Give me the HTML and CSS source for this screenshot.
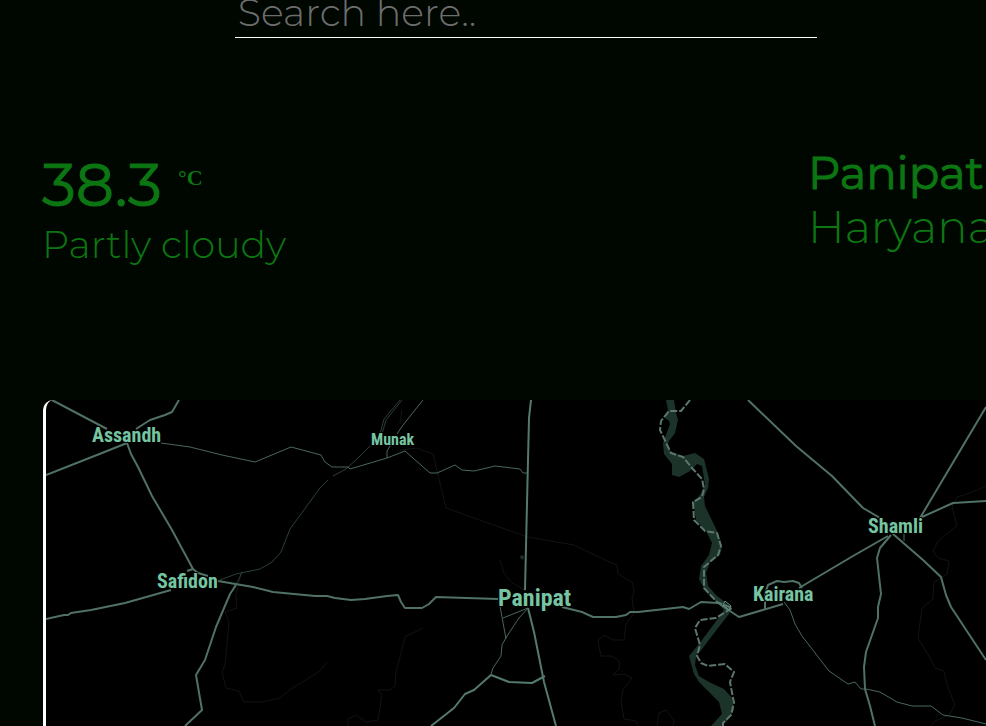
FILE: index.html
```html
<!DOCTYPE html>
<html lang="en">
<head>
<meta charset="utf-8">
<title>Weather</title>
<link rel="stylesheet" href="styles.css">
</head>
<body>
<main class="page">
  <form class="search">
    <input class="search-input" type="text" aria-label="Search" placeholder="Search here..">
  </form>
  <section class="summary">
    <div class="weather">
      <div class="temperature"><span class="degrees">38.3</span><span class="unit">°C</span></div>
      <div class="condition">Partly cloudy</div>
    </div>
    <div class="place">
      <div class="city">Panipat</div>
      <div class="region">Haryana</div>
    </div>
  </section>
  <section class="map">
    <svg class="map-canvas" viewBox="46 400 940 326" preserveAspectRatio="xMinYMin slice" role="img" aria-label="Map around Panipat">
      <g class="river">
        <path d="M666 400H674L676 413L678 420L675 433L669 441L667 445L671 452L683 456L695 453L704 459L709 479L708 488L704 497L705 506L718 533L722 546L720 555L710 562L706 573L708 586L716 595L726 603L731 607L729 614L718 628L702 649L696 656L695 665L699 676L709 682L724 689L732 698L734 710L727 721L721 726H711L722 714L719 702L709 692L699 682L694 674L689 656L699 644L714 624L724 610L718 603L706 592L699 579L701 566L709 555L712 543L706 531L696 520L693 502L700 495L705 485L702 466L697 464L690 471L679 477L672 475V464L664 454L663 443L670 424L669 421L665 418L668 410Z"/>
        <path d="M521 555L524 556L523 560L520 558Z"/>
      </g>
      <g class="boundary">
        <path d="M400 450L417 448L427 452L433 454L440 483L446 508L485 522L528 537L574 545L605 560L617 565L618 574L632 582L634 591L632 599L634 613L626 624L624 640L613 640L604 635L598 641L601 656L612 656L620 662L619 669L613 675L624 674L632 678L623 690L621 702L624 719L636 721L638 726"/>
        <path d="M657 726L659 713L666 710L674 720L673 726"/>
        <path d="M242 571L236 594L237 608L225 612L229 622L225 665L222 672L226 688L239 691L244 702L262 702L280 698L291 689L320 671L327 662"/>
        <path d="M423 628L405 637L401 653L396 672L395 686L390 690L378 690L382 695L378 720L366 722L356 715L348 719V726"/>
        <path d="M986 486L970 493L957 497L952 507L957 526L938 541L933 551L938 558L949 561L947 574L934 582L933 599L922 608L918 638L930 658L935 668L944 671L947 685L955 705L949 715L935 721L931 726"/>
        <path d="M500 560L504 573L511 582L526 591M402 409L400 424"/>
      </g>
      <g class="canal">
        <path d="M400 400L384 419L380 434M402 400L386 420L382 434M370 446L359 457L346 469L333 476"/>
        <path d="M328 480L320 488L290 529L281 552L272 562L260 569L236 574L220 580M242 572L238 581L233 588"/>
      </g>
      <g class="minor">
        <path d="M161 443L190 447L222 455L255 462L291 447L321 455L325 462L332 467L348 467L350 469L387 458L405 451L430 473L437 473L455 465L462 470L474 471L495 466L520 469L523 473H528M423 400L403 425L397 434M390 446L387 451V458"/>
        <path d="M500 606L506 639M503 618L528 608L519 618L507 636L502 645L501 656L493 668L491 674"/>
        <path d="M784 602L790 610L795 624L802 636L829 671L848 684L855 682L861 689L866 689L880 692L897 702L912 706H931L943 715L962 718L986 724M904 534V541"/>
      </g>
      <g class="road">
        <path d="M52 400L107 429M179 400L172 412L165 415L150 420L136 429M46 475L102 453L127 443M127 443L131 454L138 467L152 496L172 530L193 569L187 571M193 569L198 573L208 576"/>
        <path d="M46 619L64 615L68 615L71 613L91 610L125 603L171 590M218 581L253 587L273 592L315 596H327L335 598L351 600L365 599L387 596L398 595L401 602L405 608H422L429 604L436 597L498 599"/>
        <path d="M236 585L230 594L216 627L205 660L196 675L202 710L185 726"/>
        <path d="M562 607L582 612L593 617H616L626 615L630 612L638 612L665 609L683 607L689 609L701 602L718 603L730 611L739 617L783 604"/>
        <path d="M765 609V602L765 594L768 585L777 581L784 582L793 581L799 583L802 588M799 588L853 556L888 536"/>
        <path d="M748 400L796 446L832 476L863 508L880 518M920 518L986 407M922 517L953 503L986 501M891 535L880 548L877 558L881 594L878 607V618L866 652L864 667L865 689L870 706L875 726M893 534L923 560L941 577L946 595L951 607L986 660"/>
      </g>
      <g class="highway">
        <path d="M531 400L529 418L528 460L525 590"/>
        <path d="M528 608L534 632L544 682L556 726M431 726L454 708L465 694L474 690L491 675L509 682L532 683L545 676"/>
      </g>
      <path class="border-line" d="M690 400L681 411H669L661 421L660 430L671 453L683 457L692 468L702 479L704 489L702 497L693 502L694 520L705 531L717 533L721 546L718 555L704 567V588L717 602L732 608L716 618L700 620L695 628L700 645L697 656L701 663L708 666L725 664L734 672L730 682L734 703L731 715L723 723V726"/>
      <path class="junction" d="M725 601L731 606L729 610L723 605Z"/>
      <g class="labels">
        <text x="92" y="442" class="town">Assandh</text>
        <text x="371" y="445" class="village">Munak</text>
        <text x="157" y="588" class="town">Safidon</text>
        <text x="498" y="606" class="town-large">Panipat</text>
        <text x="753" y="601" class="town">Kairana</text>
        <text x="868" y="533" class="town">Shamli</text>
      </g>
    </svg>
  </section>
</main>
</body>
</html>
```
FILE: styles.css
```css
* {
  box-sizing: border-box;
}

body {
  margin: 0;
  background: #000600;
  color: #0c7612;
  font-family: Montserrat, Inter, sans-serif;
  font-weight: 300;
  overflow: hidden;
}

.page {
  display: flex;
  flex-direction: column;
  height: 100vh;
}

.search {
  display: flex;
  justify-content: center;
  padding-left: 66px;
}

.search-input {
  width: 63.3%;
  height: 38px;
  padding: 0 3px 12px;
  border: 0;
  border-bottom: 1px solid #fff;
  background: transparent;
  color: #777;
  font: inherit;
  font-size: 38px;
  font-weight: 300;
  line-height: 40px;
  outline: none;
}

.search-input::placeholder {
  color: #6d6d6d;
}

.summary {
  display: flex;
  justify-content: space-between;
  height: 362px;
  padding: 108px 0 0 42px;
  white-space: nowrap;
}

.weather {
  padding-top: 3px;
}

.temperature {
  display: flex;
  gap: 16px;
  line-height: 72px;
}

.degrees {
  font-size: 60px;
  font-weight: 400;
  -webkit-text-stroke: 1px;
}

.unit {
  font-family: "Liberation Serif", serif;
  font-size: 22px;
  font-weight: 700;
  line-height: 58px;
}

.condition {
  font-size: 38px;
  font-weight: 300;
  line-height: 48px;
}

.place {
  width: 178px;
  line-height: 54px;
}

.city {
  font-size: 45px;
  font-weight: 400;
  -webkit-text-stroke: 1px;
}

.region {
  font-size: 45px;
  font-weight: 300;
}

.map {
  flex: 1;
  min-height: 0;
  margin-left: 43px;
  border-left: 3px solid #fff;
  border-radius: 10px 0 0 10px;
  border-bottom-left-radius: 0;
  background: #000;
  overflow: hidden;
}

.map-canvas {
  display: block;
  width: 100%;
  height: 100%;
  fill: none;
  stroke-linejoin: round;
}

.river {
  fill: #1b3329;
}

.boundary {
  stroke: #101413;
  stroke-width: 1;
}

.canal {
  stroke: #2b3f38;
  stroke-width: 1;
}

.minor {
  stroke: #4a665d;
  stroke-width: 1;
}

.road {
  stroke: #507166;
  stroke-width: 2;
}

.highway {
  stroke: #547a6d;
  stroke-width: 2;
}

.border-line {
  stroke: #5c776d;
  stroke-width: 2;
  stroke-dasharray: 7 2;
}

.junction {
  stroke: #6d9484;
  stroke-width: 1;
}

.labels {
  fill: #76c5a2;
  stroke: #000;
  stroke-width: 2;
  paint-order: stroke;
  font-family: "Roboto Condensed", "Liberation Sans Narrow", sans-serif;
  font-weight: 700;
}

.town {
  font-size: 20px;
}

.village {
  font-size: 16px;
}

.town-large {
  font-size: 24px;
}
```
